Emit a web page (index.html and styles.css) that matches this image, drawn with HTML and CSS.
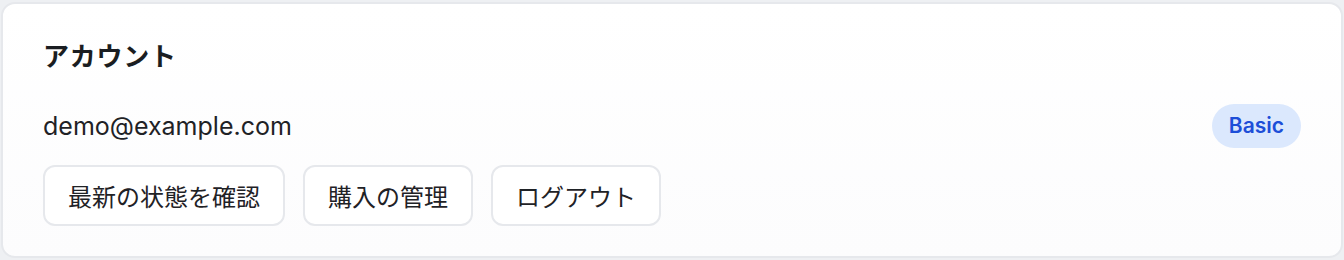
FILE: index.html
```html
<!DOCTYPE html>
<html lang="ja">
  <head>
    <meta charset="UTF-8" />
    <meta name="viewport" content="width=device-width, initial-scale=1.0" />
    <title>アカウント</title>
    <link rel="stylesheet" href="styles.css">
  </head>
  <body>
    <section class="account-card">
      <h2 class="account-title">アカウント</h2>

      <div class="account-row">
        <span class="account-email">demo@example.com</span>
        <span class="plan-badge">Basic</span>
      </div>

      <div class="account-actions">
        <button class="action-btn" id="refresh">最新の状態を確認</button>
        <button class="action-btn" id="purchases">購入の管理</button>
        <button class="action-btn" id="logout">ログアウト</button>
      </div>
    </section>
  </body>
</html>
```

FILE: styles.css
```css
body {
  margin: 0;
  padding: 2px 1px 1px 1px;
  background: #eef0f3;
  font-family: "Inter", "Noto Sans CJK JP", sans-serif;
  color: #1f2226;
}

.account-card {
  height: 256px;
  box-sizing: border-box;
  padding: 33px 40px 0 40px;
  background: linear-gradient(#ffffff, #fcfcfd);
  border: 2px solid #e6e8ec;
  border-radius: 14px;
}

.account-title {
  margin: 0;
  font-family: "Noto Sans CJK JP", sans-serif;
  font-size: 26px;
  line-height: 36px;
  font-weight: 700;
  letter-spacing: 0.03em;
  color: #1a1d21;
}

.account-row {
  display: flex;
  align-items: center;
  justify-content: space-between;
  margin-top: 31px;
}

.account-email {
  font-size: 25px;
  color: #1f2226;
}

.plan-badge {
  height: 44px;
  line-height: 44px;
  padding: 0 17px;
  border-radius: 22px;
  background: #dbe8fd;
  color: #1d4ed8;
  font-size: 21px;
  font-weight: 600;
}

.account-actions {
  display: flex;
  gap: 18px;
  margin-top: 17px;
}

.action-btn {
  height: 61px;
  padding: 0 23px;
  background: #ffffff;
  border: 2px solid #e6e8ec;
  border-radius: 12px;
  font-family: "Noto Sans CJK JP", sans-serif;
  font-size: 24px;
  color: #1f2226;
  cursor: pointer;
}
```
